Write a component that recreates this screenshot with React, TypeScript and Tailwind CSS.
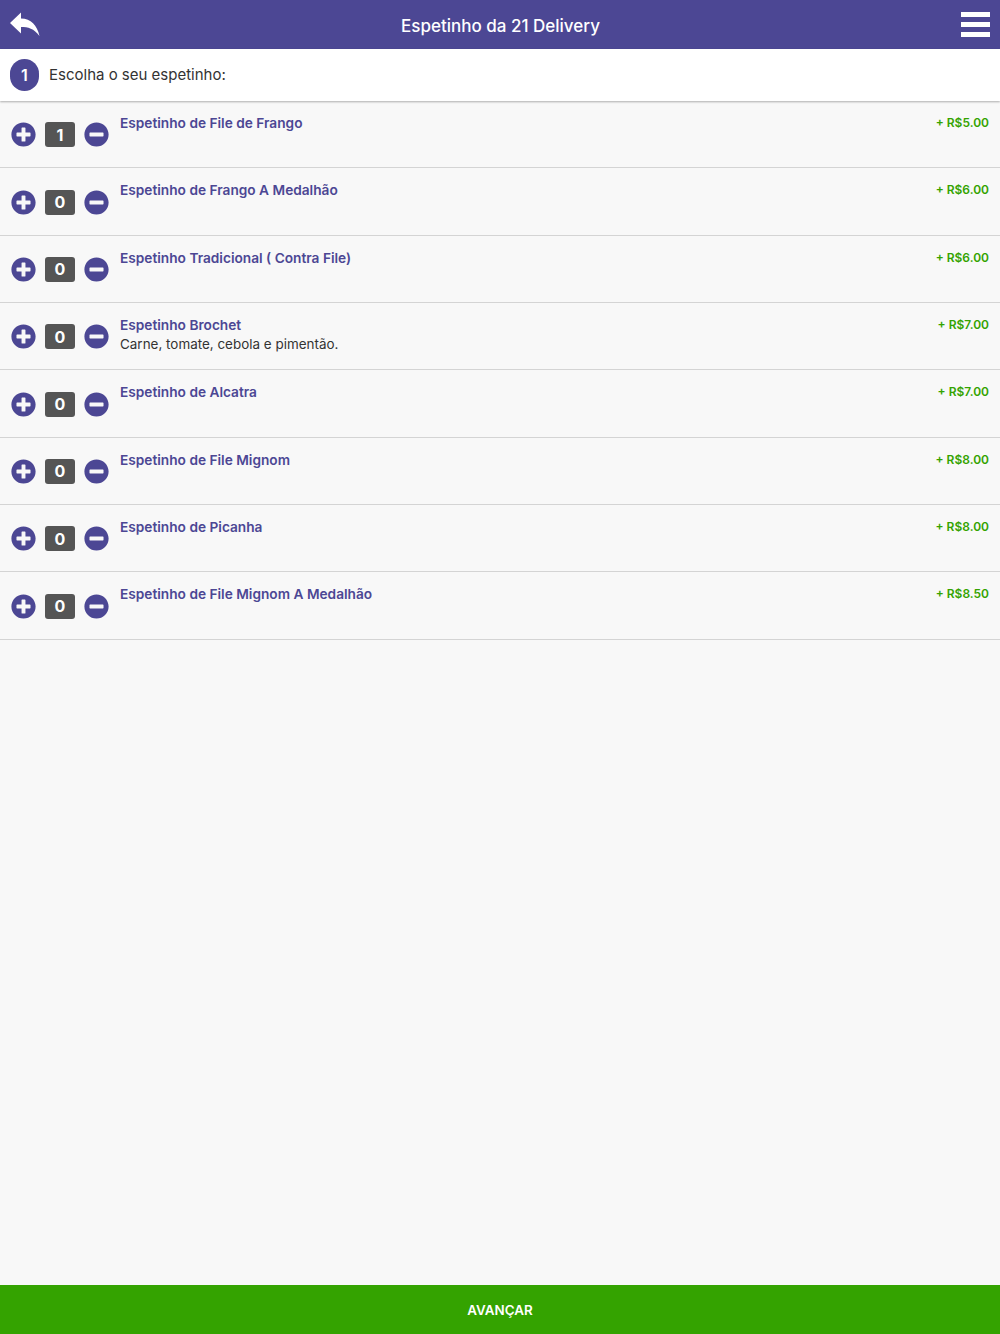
import React from 'react';
import { FaMinusCircle, FaPlusCircle } from 'react-icons/fa';

const items = [
  { name: 'Espetinho de File de Frango', price: '+ R$5.00', qty: 1 },
  { name: 'Espetinho de Frango A Medalhão', price: '+ R$6.00', qty: 0 },
  { name: 'Espetinho Tradicional ( Contra File)', price: '+ R$6.00', qty: 0 },
  { name: 'Espetinho Brochet', description: 'Carne, tomate, cebola e pimentão.', price: '+ R$7.00', qty: 0 },
  { name: 'Espetinho de Alcatra', price: '+ R$7.00', qty: 0 },
  { name: 'Espetinho de File Mignom', price: '+ R$8.00', qty: 0 },
  { name: 'Espetinho de Picanha', price: '+ R$8.00', qty: 0 },
  { name: 'Espetinho de File Mignom A Medalhão', price: '+ R$8.50', qty: 0 },
];

const App = () => {
  return (
    <div className="h-screen flex flex-col bg-[#f8f8f8] font-['Inter',sans-serif] overflow-hidden">
      {/* Header */}
      <header className="h-[49px] shrink-0 bg-[#4c4794] text-white flex items-center justify-between pl-[10px] pr-[10px]">
        <svg viewBox="0 0 30 24" className="w-[30px] h-[24px] -mt-[2px] fill-white">
          <path d="M0 11 L11 0.5 L11 6.5 C21 6.5 27 13 29.5 24 C24 16.5 18 15 11 15 L11 21.5 Z" />
        </svg>
        <h1 className="text-[17px] font-medium mt-[4px]">Espetinho da 21 Delivery</h1>
        <svg viewBox="0 0 29 25" className="w-[29px] h-[25px] fill-white">
          <rect x="0" y="0" width="29" height="5" />
          <rect x="0" y="10" width="29" height="5" />
          <rect x="0" y="20" width="29" height="5" />
        </svg>
      </header>

      {/* Step title */}
      <div className="h-[52px] shrink-0 bg-white flex items-center pl-[10px] shadow-[0_1px_2px_rgba(0,0,0,0.3)] relative">
        <div className="w-[29px] h-[32px] rounded-full bg-[#4c4794] text-white flex items-center justify-center text-[16px] font-semibold">
          1
        </div>
        <p className="ml-[10px] text-[15px] text-[#333333]">Escolha o seu espetinho:</p>
      </div>

      {/* Items */}
      <ul className="flex-1">
        {items.map((item, index) => (
          <li key={index} className="h-[67.35px] border-b border-[#d4d4d4] flex pl-[11px] pr-[11px]">
            <div className="flex items-center gap-[9px] h-full pt-[1px] shrink-0 text-[#4c4794]">
              <FaPlusCircle className="w-[25px] h-[25px]" />
              <span className="w-[30px] h-[25px] rounded-[3px] bg-[#555555] text-white text-[16px] font-bold flex items-center justify-center">
                {item.qty}
              </span>
              <FaMinusCircle className="w-[25px] h-[25px]" />
            </div>
            <div className="ml-[11px] flex-1 pt-[12px]">
              <p className="text-[13.7px] leading-[20px] font-semibold text-[#4c4794]">{item.name}</p>
              {item.description && (
                <p className="text-[13.45px] leading-[19px] text-[#333333]">{item.description}</p>
              )}
            </div>
            <span className="pt-[12px] text-[12px] leading-[20px] font-semibold text-[#34a300]">{item.price}</span>
          </li>
        ))}
      </ul>

      {/* Footer */}
      <button className="h-[49px] shrink-0 pt-[1px] bg-[#34a300] text-white text-[13.4px] font-semibold">AVANÇAR</button>
    </div>
  );
};

export default App;
